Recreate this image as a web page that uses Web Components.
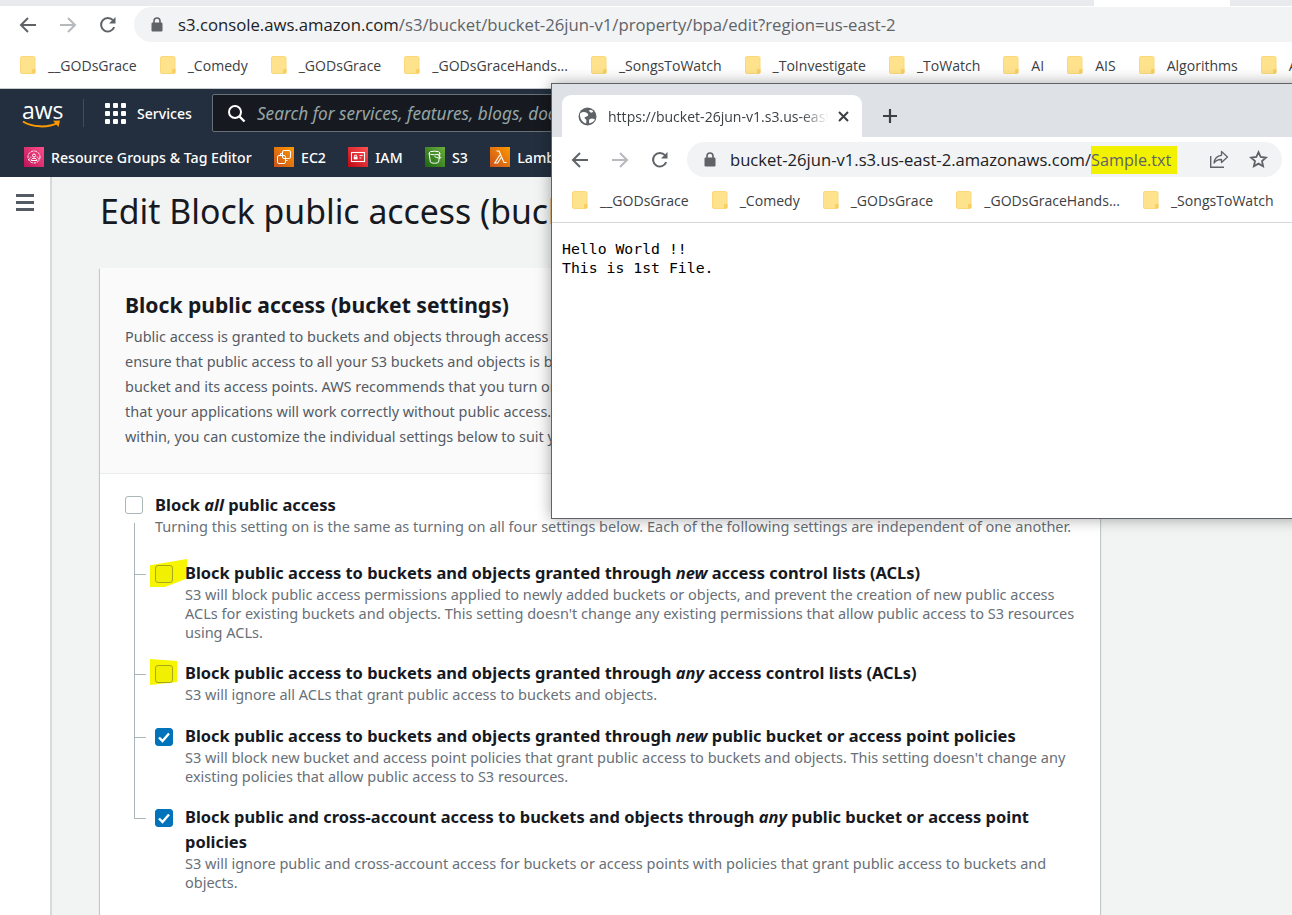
<!DOCTYPE html>
<html>
<head>
<meta charset="utf-8">
<title>Edit Block public access</title>
<style>
	html, body { margin: 0; padding: 0; height: 915px; overflow: hidden; background: #fff; }
	body { position: relative; font-family: "Open Sans", "Liberation Sans", sans-serif; }
	main-view { width: 1292px; }
</style>
</head>
<body>

<main-view>
	<browser-bar slot="chrome" host="s3.console.aws.amazon.com" path="/s3/bucket/bucket-26jun-v1/property/bpa/edit?region=us-east-2"></browser-bar>
	<bookmark-bar slot="chrome" names="__GODsGrace|_Comedy|_GODsGrace|_GODsGraceHands...|_SongsToWatch|_ToInvestigate|_ToWatch|AI|AIS|Algorithms|A"></bookmark-bar>
	<aws-nav slot="chrome"></aws-nav>

	<block-card>
		<setting-row slot="children" pad="38" mark="a" tail="19">
			<span slot="title">Block public access to buckets and objects granted through <i>new</i> access control lists (ACLs)</span>
			S3 will block public access permissions applied to newly added buckets or objects, and prevent the creation of new public access<br>
			ACLs for existing buckets and objects. This setting doesn't change any existing permissions that allow public access to S3 resources<br>
			using ACLs.
		</setting-row>
		<setting-row slot="children" mark="b" tail="20">
			<span slot="title">Block public access to buckets and objects granted through <i>any</i> access control lists (ACLs)</span>
			S3 will ignore all ACLs that grant public access to buckets and objects.
		</setting-row>
		<setting-row slot="children" checked tail="19">
			<span slot="title">Block public access to buckets and objects granted through <i>new</i> public bucket or access point policies</span>
			S3 will block new bucket and access point policies that grant public access to buckets and objects. This setting doesn't change any<br>
			existing policies that allow public access to S3 resources.
		</setting-row>
		<setting-row slot="children" checked last tail="18">
			<span slot="title">Block public and cross-account access to buckets and objects through <i>any</i> public bucket or access point<br>policies</span>
			S3 will ignore public and cross-account access for buckets or access points with policies that grant public access to buckets and<br>
			objects.
		</setting-row>
	</block-card>
</main-view>

<browser-window></browser-window>

<script>
const ARROW = (flip, col) => `<svg width="18" height="18" viewBox="0 0 18 18" style="${flip ? "transform:scaleX(-1)" : ""}"><path d="M17 9H2.5M9 2 2 9l7 7" fill="none" stroke="${col}" stroke-width="2"/></svg>`;
const RELOAD = `<svg width="18" height="18" viewBox="0 0 18 18"><path d="M15.2 11.2A6.8 6.8 0 1 1 14 4.2" fill="none" stroke="#5f6368" stroke-width="2"/><path d="M16.5 1v6.6H10z" fill="#5f6368"/></svg>`;
const LOCK = `<svg width="12" height="15" viewBox="0 0 12 15"><path d="M3 6V4a3 3 0 0 1 6 0v2" fill="none" stroke="#5f6368" stroke-width="1.6"/><rect x="0.5" y="5.5" width="11" height="9" rx="1.2" fill="#5f6368"/></svg>`;
const FOLDER = `<svg width="16" height="18" viewBox="0 0 16 18"><rect x=".5" y=".5" width="14.500" height="17" rx="1.500" fill="#ffe28c" stroke="#fbd97a"/><path d="M12 17.500V14a1 1 0 0 1 1-1h2.500v3.500a1 1 0 0 1-1 1z" fill="#f7cf62"/></svg>`;

// url row of a browser
class BrowserBar extends HTMLElement
{
	constructor ()
	{
		super();
		this.attachShadow({mode:"open"});
	}

	connectedCallback ()
	{
		let host = this.getAttribute("host");
		let path = this.getAttribute("path") || "";
		let mark = this.getAttribute("mark") || "";
		let compact = this.hasAttribute("compact");
		this.shadowRoot.innerHTML = `
			<style>
			:host { display: block; background: #fff; }
			.strip { height: 6px; display: flex; }
			.strip i { background: #e8eaed; }
			.strip i:first-child { width: 1094px; }
			.strip i:last-child { width: 62px; margin-left: 136px; }
			.row { height: 38px; display: flex; align-items: center; }
			.btns { display: grid; grid-template-columns: repeat(3, 18px); column-gap: 22px; margin-left: 19px; margin-right: 17px; }
			.btns svg { display: block; }
			.omni { flex: 1; height: 35px; margin-bottom: 1px; box-sizing: border-box; border-radius: 18px 0 0 18px; background: #f1f3f4; display: flex; align-items: center; padding-left: 17px; min-width: 0; }
			.url { margin-left: 15px; font-size: 16.72px; color: #5f6368; white-space: nowrap; }
			.url b { font-weight: 400; color: #202124; }
			mark { background: #f2f200; color: #5f6368; padding: 3px 6px 3px 0; font-size: 16.2px; }
			.tools { display: flex; gap: 20px; align-items: center; margin-left: auto; margin-right: 14px; }
			:host([compact]) .strip { display: none; }
			:host([compact]) .row { height: 45px; padding-top: 0; }
			:host([compact]) .btns { margin-left: 19px; margin-right: 18px; }
			:host([compact]) .omni { border-radius: 18px; flex: none; width: 595px; padding-left: 17px; }
			:host([compact]) .url { margin-left: 14px; font-size: 16.62px; }
			</style>
			<div class="strip"><i></i><i></i></div>
			<div class="row">
				<div class="btns">${ARROW(false, "#5f6368")}${ARROW(true, "#b6b9bd")}${RELOAD}</div>
				<div class="omni">
					${LOCK}
					<span class="url"><b>${host}</b>${path}${mark ? `<mark>${mark}</mark>` : ""}</span>
					${compact ? `<span class="tools">
						<svg width="20" height="20" viewBox="0 0 20 20"><path d="M12.500 2.500 18.500 8l-6 5.500v-3C9 10.300 6.800 11.500 5 14c.4-4.400 3.200-7.200 7.500-7.700z" fill="none" stroke="#5f6368" stroke-width="1.300" stroke-linejoin="round"/><path d="M1.700 7v11.300H15" fill="none" stroke="#5f6368" stroke-width="1.400"/></svg>
						<svg width="19" height="19" viewBox="0 0 19 19"><path d="M9.500 2.200l2.200 4.800 5.200.6-3.900 3.500 1.100 5.200-4.600-2.700-4.600 2.700 1.100-5.200L2.100 7.600l5.200-.6z" fill="none" stroke="#5f6368" stroke-width="1.800"/></svg>
					</span>` : ""}
				</div>
			</div>
		`;
	}
}
customElements.define("browser-bar", BrowserBar);

// row of yellow folders
class BookmarkBar extends HTMLElement
{
	constructor ()
	{
		super();
		this.attachShadow({mode:"open"});
	}

	connectedCallback ()
	{
		let items = this.getAttribute("names").split("|")
			.map(n => `<span class="item">${FOLDER}<span>${n}</span></span>`).join("");
		this.shadowRoot.innerHTML = `
			<style>
			:host { display: flex; align-items: center; height: 42px; padding: 0 0 2px 20px; gap: 23px; overflow: hidden; background: #fff; font-family: "Open Sans", sans-serif; font-size: 14.05px; color: #3c4043; white-space: nowrap; }
			:host([compact]) { height: 36px; padding: 0 0 4px 20px; border-bottom: 1px solid #d5d7da; }
			.item { display: inline-flex; align-items: center; gap: 12px; flex: none; }
			svg { flex: none; }
			</style>
			${items}
		`;
	}
}
customElements.define("bookmark-bar", BookmarkBar);

// one favourite of the aws nav
class NavShortcut extends HTMLElement
{
	constructor ()
	{
		super();
		this.attachShadow({mode:"open"});
		this.shadowRoot.innerHTML = `
			<style>
			:host { display: inline-flex; align-items: center; gap: 7px; flex: none; font-size: 14.15px; font-weight: 500; color: #fff; white-space: nowrap; }
			.ico { width: 20px; height: 20px; display: block; }
			svg { display: block; width: 20px; height: 20px; }
			</style>
			<span class="ico"><slot name="icon"></slot></span><slot></slot>
		`;
	}
}
customElements.define("nav-shortcut", NavShortcut);

class AwsNav extends HTMLElement
{
	constructor ()
	{
		super();
		this.attachShadow({mode:"open"});
		const tile = (id, a, b, body) => `<svg slot="icon" width="20" height="20" viewBox="0 0 20 20"><defs><linearGradient id="${id}" x1="0" y1="1" x2="1" y2="0"><stop offset="0" stop-color="${a}"/><stop offset="1" stop-color="${b}"/></linearGradient></defs><rect width="20" height="20" fill="url(#${id})"/><g fill="none" stroke="#fff" stroke-width="1">${body}</g></svg>`;
		this.shadowRoot.innerHTML = `
			<style>
			:host { display: block; height: 89px; background: #232f3e; border-top: 1px solid #c8ccd0; box-sizing: border-box; font-family: "Noto Sans", "Open Sans", sans-serif; color: #fff; }
			.top { height: 48px; display: flex; align-items: center; }
			.logo { width: 40px; height: 25px; margin-left: 22px; position: relative; flex: none; margin-top: 0; }
			.logo span { display: block; font-family: "Open Sans", sans-serif; font-size: 23px; line-height: 19px; letter-spacing: 0; text-align: center; color: #fff; }
			.logo svg { display: block; margin-top: 0; }
			.div { width: 1px; height: 28px; background: #414d5c; margin: 0 21px 0 21px; flex: none; }
			.apps { display: grid; grid-template-columns: repeat(3, 5px); gap: 3px; flex: none; margin-right: 11px; }
			.apps i { width: 5px; height: 5px; background: #fff; border-radius: 1px; }
			.svc { font-size: 14.1px; font-weight: 500; margin-right: 20px; }
			.search { flex: 1; height: 38px; box-sizing: border-box; background: #16191f; border: 1px solid #687078; border-radius: 2px; display: flex; align-items: center; padding-left: 14px; gap: 11px; font-style: italic; font-size: 17.2px; color: #95a5a6; white-space: nowrap; }
			.bottom { display: flex; align-items: center; height: 40px; padding-left: 24px; gap: 22.4px; overflow: hidden; }
			</style>
			<div class="top">
				<div class="logo"><span>aws</span>
					<svg width="40" height="9" viewBox="0 0 40 9"><path d="M1 1.500C10 7.500 26 8 36 2.800" fill="none" stroke="#f90" stroke-width="2"/><path d="M31 .8l7-.4-1.500 6.500z" fill="#f90"/></svg>
				</div>
				<div class="div"></div>
				<div class="apps"><i></i><i></i><i></i><i></i><i></i><i></i><i></i><i></i><i></i></div>
				<span class="svc">Services</span>
				<div class="search">
					<svg width="19" height="19" viewBox="0 0 19 19"><circle cx="8" cy="8" r="6" fill="none" stroke="#fff" stroke-width="2"/><path d="M12.500 12.500l5 5" stroke="#fff" stroke-width="2.400"/></svg>
					Search for services, features, blogs, docs, and more
				</div>
			</div>
			<div class="bottom">
				<nav-shortcut>${tile("t1", "#bc1356", "#ff4f8b", `<circle cx="10" cy="10" r="6" stroke-dasharray="2.500 1"/><circle cx="10" cy="8.500" r="1.500"/><path d="M7 13.500c0-3 6-3 6 0z"/><path d="M5.500 12.500c0-2 1-2.500 2-2.500M14.500 12.500c0-2-1-2.500-2-2.500" stroke-width=".7"/>`)}Resource Groups &amp; Tag Editor</nav-shortcut>
				<nav-shortcut>${tile("t2", "#c8511b", "#ff9900", `<rect x="3.500" y="8.500" width="8" height="8" rx="1.500"/><rect x="8.500" y="3.500" width="8" height="8" rx="1.500"/><path d="M6.500 8.500V6.500h2M11.500 11.500v2h2" stroke-width=".9"/>`)}EC2</nav-shortcut>
				<nav-shortcut>${tile("t3", "#bd0816", "#ff5252", `<rect x="3.500" y="5.500" width="13" height="9" stroke-width="1.100"/><rect x="5.700" y="9.600" width="3.800" height="2.800" fill="#fff" stroke="none"/><path d="M6.500 9.600V8.200h2.200v1.400M11.500 8.500h3.200M11.500 11h1.800" stroke-width=".9"/>`)}IAM</nav-shortcut>
				<nav-shortcut>${tile("t4", "#1b660f", "#6cae3e", `<ellipse cx="9.500" cy="6" rx="5.500" ry="1.800"/><path d="M4 6l1.400 9c.4 1.600 7.800 1.600 8.200 0L15 6"/><path d="M9.500 9.500c3 1.600 5.800 1.900 6.300 1.300.4-.6-1-1.500-2.800-2.300"/>`)}S3</nav-shortcut>
				<nav-shortcut>${tile("t5", "#c8511b", "#ff9900", `<path d="M6.500 4H9l5 11.500h2.500M9.800 8 4.800 16h2.800l3.700-5.800" stroke-width="1.100"/>`)}Lambda</nav-shortcut>
			</div>
		`;
	}
}
customElements.define("aws-nav", AwsNav);

const TICK = `<svg width="18" height="18" viewBox="0 0 18 18"><path d="M4 9.500l3.500 3.500L14 5.500" fill="none" stroke="#fff" stroke-width="2.400"/></svg>`;

// indented checkbox with title and description
class SettingRow extends HTMLElement
{
	constructor ()
	{
		super();
		this.attachShadow({mode:"open"});
	}

	connectedCallback ()
	{
		let pad   = parseInt(this.getAttribute("pad") || "0");
		let tail  = parseInt(this.getAttribute("tail") || "19");
		let mark  = this.getAttribute("mark") || "";
		let check = this.hasAttribute("checked");
		this.shadowRoot.innerHTML = `
			<style>
			:host { display: grid; grid-template-columns: 21px 30px 1fr; font-size: 14.5px; }
			.tree { position: relative; }
			.tree::after { content: ""; position: absolute; left: 0; top: 0; bottom: 0; width: 1px; background: #aab7b8; }
			.tree::before { content: ""; position: absolute; left: 0; top: ${pad + 13}px; width: 12px; height: 1px; background: #aab7b8; }
			:host([last]) .tree::after { bottom: auto; height: ${pad + 13}px; }
			.cell { padding-top: ${pad + 4}px; position: relative; }
			.box { width: 18px; height: 18px; box-sizing: border-box; border-radius: 3px; border: 1px solid #aab7b8; background: #fff; position: relative; }
			.box.on { background: #0073bb; border-color: #0073bb; border-radius: 3px; }
			.box.on svg { display: block; margin: -1px; }
			.box.hl { background: #f0f000; border-color: #a6a81c; }
			.hl-a::before, .hl-b::before { content: ""; position: absolute; background: #f8f500; z-index: 0; }
			.hl-a::before { left: -5px; top: ${pad - 2}px; width: 37px; height: 28px; clip-path: polygon(0 22%, 100% 0, 100% 70%, 40% 100%, 0 100%); }
			.hl-b::before { left: -5px; top: ${pad - 2}px; width: 27px; height: 26px; clip-path: polygon(0 0, 100% 8%, 100% 88%, 0 100%); }
			.box { z-index: 1; }
			.text { padding-top: ${pad}px; padding-bottom: ${tail}px; min-width: 0; position: relative; z-index: 1; }
			.title { font-weight: 700; font-size: 16.45px; line-height: 24px; color: #16191f; white-space: nowrap; }
			:host([last]) .title { line-height: 25px; }
			:host([last]) .text { margin-top: -1px; }
			.desc { line-height: 19px; color: #687078; white-space: nowrap; }
			</style>
			<div class="tree"></div>
			<div class="cell ${mark ? "hl-" + mark : ""}"><div class="box ${check ? "on" : ""} ${mark ? "hl" : ""}">${check ? TICK : ""}</div></div>
			<div class="text">
				<div class="title"><slot name="title"></slot></div>
				<div class="desc"><slot></slot></div>
			</div>
		`;
	}
}
customElements.define("setting-row", SettingRow);

class BlockCard extends HTMLElement
{
	constructor ()
	{
		super();
		this.attachShadow({mode:"open"});
		this.shadowRoot.innerHTML = `
			<style>
			:host { display: block; width: 1000px; background: #fff; box-shadow: 0 1px 1px 0 rgba(0,28,36,.3), 1px 1px 1px 0 rgba(0,28,36,.15), -1px 1px 1px 0 rgba(0,28,36,.15); font-family: "Noto Sans", "Open Sans", sans-serif; color: #16191f; }
			header { height: 206px; box-sizing: border-box; background: #fafafa; border-bottom: 1px solid #eaeded; padding: 22px 25px 0; }
			h2 { margin: 0; font-size: 21.1px; line-height: 30px; font-weight: 700; white-space: nowrap; }
			p { margin: 4px 0 0; font-size: 14.45px; line-height: 25px; color: #545b64; white-space: nowrap; }
			.body { padding: 19px 25px 60px; }
			.all { display: grid; grid-template-columns: 30px 1fr; }
			.all .box { width: 18px; height: 18px; box-sizing: border-box; margin-top: 3px; border: 1px solid #aab7b8; border-radius: 3px; background: #fff; }
			.all b { display: block; font-size: 16.5px; line-height: 24px; font-weight: 700; }
			.all b i { font-weight: 700; }
			.all span { display: block; font-size: 14.53px; line-height: 19px; color: #687078; white-space: nowrap; }
			.kids { margin: -13px 0 0 9px; }
			</style>
			<header>
				<h2>Block public access (bucket settings)</h2>
				<p>Public access is granted to buckets and objects through access control lists (ACLs), bucket policies, access point policies, or all. In order to<br>
				ensure that public access to all your S3 buckets and objects is blocked, turn on Block all public access. These settings apply only to this<br>
				bucket and its access points. AWS recommends that you turn on Block all public access, but before applying any of these settings, ensure<br>
				that your applications will work correctly without public access. If you require some level of public access to your buckets or objects<br>
				within, you can customize the individual settings below to suit your specific storage use cases.</p>
			</header>
			<div class="body">
				<div class="all">
					<div class="box"></div>
					<div><b>Block <i>all</i> public access</b>
					<span>Turning this setting on is the same as turning on all four settings below. Each of the following settings are independent of one another.</span></div>
				</div>
				<div class="kids"><slot name="children"></slot></div>
			</div>
		`;
	}
}
customElements.define("block-card", BlockCard);

// outer browser with the s3 console inside
class MainView extends HTMLElement
{
	constructor ()
	{
		super();
		this.attachShadow({mode:"open"});
		this.shadowRoot.innerHTML = `
			<style>
			:host { display: block; height: 915px; overflow: hidden; background: #f2f3f3; }
			.page { display: flex; height: 738px; overflow: hidden; }
			aside { width: 52px; flex: none; box-sizing: border-box; background: #fff; border-right: 2px solid #d5dbdb; padding: 17px 0 0 16px; }
			aside i { display: block; width: 18px; height: 3px; background: #545b64; margin-bottom: 4px; }
			.content { flex: 1; padding: 12px 0 0 48px; min-width: 0; }
			h1 { margin: 0 0 34px; font-family: "Noto Sans", "Open Sans", sans-serif; font-weight: 400; font-size: 33.8px; line-height: 45px; color: #16191f; white-space: nowrap; }
			</style>
			<slot name="chrome"></slot>
			<div class="page">
				<aside><i></i><i></i><i></i></aside>
				<div class="content">
					<h1>Edit Block public access (bucket settings)</h1>
					<slot></slot>
				</div>
			</div>
		`;
	}
}
customElements.define("main-view", MainView);

// second window lying over the console
class BrowserWindow extends HTMLElement
{
	constructor ()
	{
		super();
		this.attachShadow({mode:"open"});
		this.shadowRoot.innerHTML = `
			<style>
			:host { position: absolute; left: 551px; top: 83px; width: 760px; height: 436px; box-sizing: border-box; background: #fff; border: 1px solid #5f6368; box-shadow: 0 0 14px rgba(0,0,0,.35); font-family: "Open Sans", sans-serif; }
			.tabs { height: 53px; background: #dee1e6; display: flex; align-items: flex-end; padding-left: 10px; }
			.tab { width: 300px; height: 42px; box-sizing: border-box; background: #fff; border-radius: 9px 9px 0 0; display: flex; align-items: center; padding-left: 16px; gap: 11px; font-size: 14.05px; color: #3c4043; }
			.tab span { width: 220px; overflow: hidden; white-space: nowrap; -webkit-mask-image: linear-gradient(90deg, #000 88%, transparent); mask-image: linear-gradient(90deg, #000 88%, transparent); flex: none; }
			.plus { margin: 0 0 0 20px; align-self: flex-end; height: 42px; display: flex; align-items: center; }
			pre { margin: 0; padding: 16px 10px; font-family: "DejaVu Sans Mono", monospace; font-size: 14.8px; line-height: 19px; color: #000; }
			</style>
			<div class="tabs">
				<div class="tab">
					<svg width="19" height="19" viewBox="0 0 19 19" style="flex:none"><circle cx="9.500" cy="9.500" r="9" fill="#5f6368"/><path d="M2 6.500c2.500-1.800 5-1.800 7-.4 1.800 1.300 1.500 3-.5 3.400-2.300.5-2.500 2-.8 2.800 1 .5.800 2 .3 4.200C4.500 16 1.500 11 2 6.500zM17 12.500c-2-1.200-4-1.200-5.500-.2-.8 1-.5 2.800 0 4.200 2.500-.8 4.500-2 5.500-4zM11 3.500c1.500-.8 3-.4 4.300.8l-1.300 1.500c-1.200-.2-2.500-.8-3-2.300z" fill="#fff"/></svg>
					<span>https://bucket-26jun-v1.s3.us-east-2.amazonaws.com/Sample.txt</span>
					<svg width="11" height="11" viewBox="0 0 11 11" style="flex:none;margin-left:-1px"><path d="M1 1l9 9M10 1l-9 9" stroke="#3c4043" stroke-width="2"/></svg>
				</div>
				<div class="plus"><svg width="16" height="16" viewBox="0 0 16 16"><path d="M8 1v14M1 8h14" stroke="#3c4043" stroke-width="2.200"/></svg></div>
			</div>
			<browser-bar compact host="bucket-26jun-v1.s3.us-east-2.amazonaws.com/" mark="Sample.txt"></browser-bar>
			<bookmark-bar compact names="__GODsGrace|_Comedy|_GODsGrace|_GODsGraceHands...|_SongsToWatch"></bookmark-bar>
			<pre>Hello World !!
This is 1st File.</pre>
		`;
	}
}
customElements.define("browser-window", BrowserWindow);
</script>
</body>
</html>
